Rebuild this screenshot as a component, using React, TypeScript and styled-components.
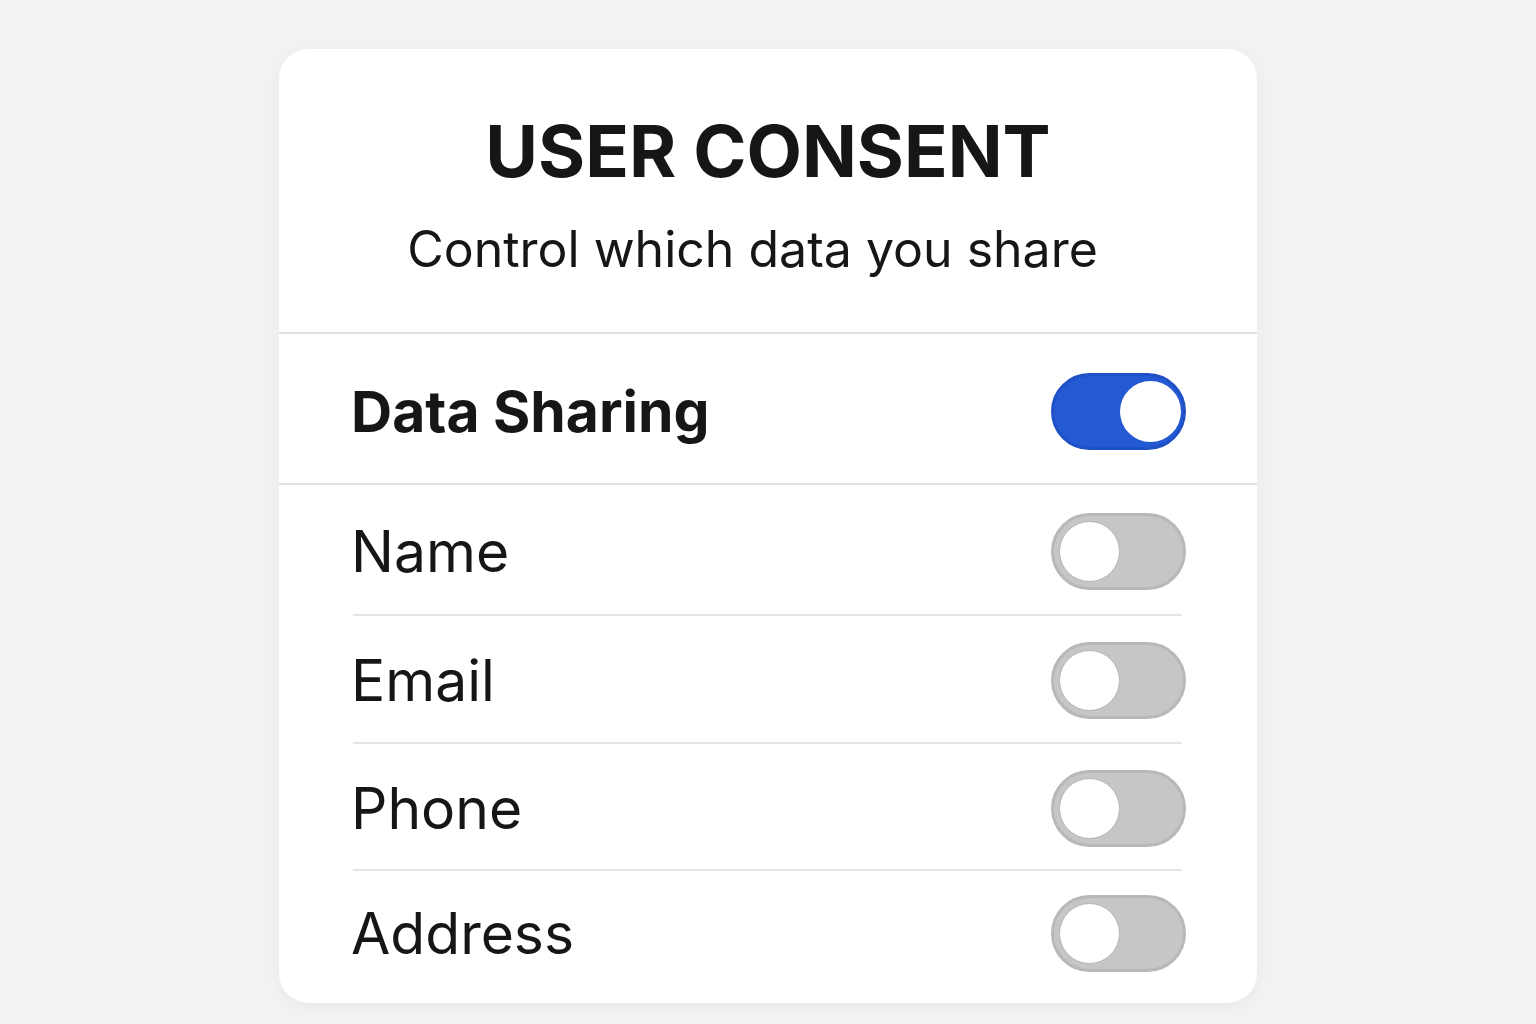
import { useState } from "react";
import styled, { createGlobalStyle } from "styled-components";

// styles

const GlobalStyle = createGlobalStyle`
  html, body {
    margin: 0;
    padding: 0;
    background: #f2f2f2;
    font-family: Inter, "Noto Sans", "Liberation Sans", sans-serif;
    color: #161616;
  }
`;

const Page = styled.div`
  width: 1536px;
  height: 1024px;
  display: flex;
  justify-content: center;
  padding-top: 49px;
  box-sizing: border-box;
`;

const Card = styled.div`
  width: 978px;
  height: 954px;
  background: #ffffff;
  border-radius: 30px;
  box-shadow: 0 4px 18px rgba(0, 0, 0, 0.04);
  display: flex;
  flex-direction: column;
  overflow: hidden;
`;

const Header = styled.div`
  height: 285px;
  display: flex;
  flex-direction: column;
  align-items: center;
  padding-top: 66px;
  box-sizing: border-box;
  border-bottom: 2px solid #e2e2e2;
`;

const Title = styled.h1`
  margin: 0;
  font-size: 72px;
  font-weight: 700;
  line-height: 1;
`;

const Subtitle = styled.p`
  margin: 37px 31px 0 0;
  font-size: 50px;
  font-weight: 400;
  line-height: 1;
`;

const MasterRow = styled.div`
  height: 151px;
  box-sizing: border-box;
  display: flex;
  align-items: center;
  justify-content: space-between;
  padding: 6px 75px 0 74px;
  border-bottom: 2px solid #e2e2e2;
`;

const MasterLabel = styled.span`
  font-size: 57px;
  font-weight: 700;
  margin-left: -2px;
`;

const List = styled.div`
  display: flex;
  flex-direction: column;
  padding: 0 75px 0 74px;
`;

const Row = styled.div<{ $h: number; $last?: boolean }>`
  height: ${(p) => p.$h}px;
  box-sizing: border-box;
  padding-top: 3px;
  display: flex;
  align-items: center;
  justify-content: space-between;
  border-bottom: ${(p) => (p.$last ? "none" : "2px solid #e5e5e5")};
`;

const RowLabel = styled.span`
  font-size: 57px;
  font-weight: 400;
  margin-left: -2px;
`;

const SwitchTrack = styled.button<{ $on: boolean }>`
  position: relative;
  width: 135px;
  height: 77px;
  border-radius: 39px;
  padding: 0;
  cursor: pointer;
  background: ${(p) => (p.$on ? "#2359d3" : "#c6c6c8")};
  border: 3px solid ${(p) => (p.$on ? "#1f50c6" : "#b8b8ba")};
  box-sizing: border-box;
  margin-right: -4px;
`;

const Knob = styled.span<{ $on: boolean }>`
  position: absolute;
  top: 5px;
  left: ${(p) => (p.$on ? "66px" : "5px")};
  width: 61px;
  height: 61px;
  border-radius: 50%;
  background: #ffffff;
  border: ${(p) => (p.$on ? "none" : "1px solid #b5b5b5")};
  box-sizing: border-box;
`;

const Switch = ({ on, onClick }: { on: boolean; onClick: () => void }) => (
  <SwitchTrack $on={on} onClick={onClick} aria-pressed={on}>
    <Knob $on={on} />
  </SwitchTrack>
);

const fields = [
  { label: "Name", h: 131 },
  { label: "Email", h: 128 },
  { label: "Phone", h: 127 },
  { label: "Address", h: 122 },
];

const App = () => {
  const [sharing, setSharing] = useState(true);
  const [enabled, setEnabled] = useState<Record<string, boolean>>({});

  return (
    <Page>
      <GlobalStyle />
      <Card>
        <Header>
          <Title>USER CONSENT</Title>
          <Subtitle>Control which data you share</Subtitle>
        </Header>
        <MasterRow>
          <MasterLabel>Data Sharing</MasterLabel>
          <Switch on={sharing} onClick={() => setSharing(!sharing)} />
        </MasterRow>
        <List>
          {fields.map((f, i) => (
            <Row key={f.label} $h={f.h} $last={i === fields.length - 1}>
              <RowLabel>{f.label}</RowLabel>
              <Switch
                on={!!enabled[f.label]}
                onClick={() =>
                  setEnabled({ ...enabled, [f.label]: !enabled[f.label] })
                }
              />
            </Row>
          ))}
        </List>
      </Card>
    </Page>
  );
};

export default App;
